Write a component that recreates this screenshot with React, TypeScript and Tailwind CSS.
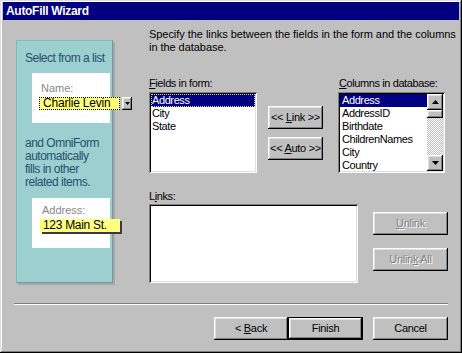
import React from 'react';

const raised =
  'bg-[#c0c0c0] shadow-[inset_-1px_-1px_#000,inset_1px_1px_#fff,inset_-2px_-2px_#808080,inset_2px_2px_#dfdfdf]';
const sunken =
  'bg-white shadow-[inset_1px_1px_#808080,inset_-1px_-1px_#fff,inset_2px_2px_#000,inset_-2px_-2px_#dfdfdf]';

interface ButtonProps {
  children: React.ReactNode;
  className?: string;
  disabled?: boolean;
}

const Button: React.FC<ButtonProps> = ({ children, className = '', disabled = false }) => (
  <div
    className={`flex h-[23px] items-center justify-center text-[11px] tracking-[-0.3px] ${raised} ${
      disabled ? 'text-[#808080] [text-shadow:1px_1px_0_#fff]' : 'text-black'
    } ${className}`}
  >
    <span className="whitespace-pre">{children}</span>
  </div>
);

const Arrow = ({ down = false }: { down?: boolean }) => (
  <svg width="7" height="4" viewBox="0 0 7 4">
    {down ? <polygon points="0,0 7,0 3.5,4" fill="#000" /> : <polygon points="0,4 7,4 3.5,0" fill="#000" />}
  </svg>
);

const fields = ['Address', 'City', 'State'];
const columns = ['Address', 'AddressID', 'Birthdate', 'ChildrenNames', 'City', 'Country'];

export default function App() {
  return (
    <div className="flex h-[353px] w-[462px] flex-col overflow-hidden bg-[#c0c0c0] px-[3px] pt-[2px] [font-family:'Liberation_Sans',Arial,sans-serif] shadow-[inset_-1px_-1px_#000,inset_1px_1px_#dfdfdf,inset_-2px_-2px_#808080,inset_2px_2px_#fff]">
      <div className="h-[18px] shrink-0 bg-[#000080] pl-[3px] text-[12px] font-bold leading-[18px] tracking-[-0.3px] text-white">
        AutoFill Wizard
      </div>

      <div className="flex">
        {/* illustration panel */}
        <div className="ml-[13px] mt-[20px] h-[243px] w-[97px] shrink-0 bg-[#9ccfcf] pt-[12px] text-[12px] leading-[13px] tracking-[-0.5px] text-[#27506e] shadow-[inset_-1px_-1px_#6d9d9d,inset_1px_1px_#86b6b6,2px_2px_0_#a8a8a8]">
          <div className="whitespace-nowrap pl-[9px]">Select from a list</div>
          <div className="ml-[16px] mt-[8px] h-[50px] w-[78px] bg-white pt-[9px]">
            <div className="pl-[9px] text-[11px] tracking-normal text-[#888]">Name:</div>
            <div className="ml-[7px] mt-[2px] flex w-max gap-[2px]">
              <div className="h-[13px] w-[81px] border border-dotted border-black bg-[#ffff80] pl-[3px] text-[12px] leading-[11px] tracking-[-0.2px] text-black">
                Charlie Levin
              </div>
              <div className={`flex h-[13px] w-[10px] items-center justify-center ${raised}`}>
                <svg width="5" height="3" viewBox="0 0 5 3">
                  <polygon points="0,0 5,0 2.5,3" fill="#000" />
                </svg>
              </div>
            </div>
          </div>
          <div className="mt-[14px] whitespace-nowrap pl-[9px]">
            and OmniForm
            <br />
            automatically
            <br />
            fills in other
            <br />
            related items.
          </div>
          <div className="ml-[16px] mt-[9px] h-[50px] w-[78px] bg-white pt-[6px]">
            <div className="pl-[10px] text-[11px] tracking-normal text-[#888]">Address:</div>
            <div className="ml-[8px] mt-[2px] h-[13px] w-[80px] whitespace-nowrap bg-[#ffff80] pl-[3px] text-[12px] leading-[13px] tracking-[-0.3px] text-black shadow-[2px_2px_0_#3a3a3a]">
              123 Main St.
            </div>
          </div>
        </div>

        {/* form side */}
        <div className="ml-[36px] mt-[8px] w-[299px] text-[11px] leading-[13px] tracking-[-0.4px] text-black">
          <div className="whitespace-nowrap tracking-[-0.05px]">
            Specify the links between the fields in the form and the columns
            <br />
            in the database.
          </div>

          <div className="mt-[23px] flex">
            <div className="w-[190px]">
              <u>F</u>ields in form:
            </div>
            <div>
              <u>C</u>olumns in database:
            </div>
          </div>

          <div className="mt-[2px] flex items-start">
            <div className={`h-[81px] w-[108px] p-[2px] ${sunken}`}>
              {fields.map((f, i) => (
                <div
                  key={f}
                  className={`h-[13px] whitespace-nowrap pl-[1px] leading-[13px] ${
                    i === 0
                      ? 'bg-[#000080] text-white outline-1 -outline-offset-1 outline-dotted outline-[#d8d890]'
                      : ''
                  }`}
                >
                  {f}
                </div>
              ))}
            </div>

            <div className="ml-[11px] mt-[14px] flex w-[55px] flex-col gap-[8px]">
              <Button>
                &lt;&lt; <u>L</u>ink &gt;&gt;
              </Button>
              <Button>
                &lt;&lt; <u>A</u>uto &gt;&gt;
              </Button>
            </div>

            <div className={`ml-[15px] flex h-[81px] w-[107px] p-[2px] ${sunken}`}>
              <div className="flex-1 overflow-hidden">
                {columns.map((c, i) => (
                  <div
                    key={c}
                    className={`h-[13px] whitespace-nowrap pl-[2px] leading-[13px] ${
                      i === 0 ? 'bg-[#000080] text-white' : ''
                    }`}
                  >
                    {c}
                  </div>
                ))}
              </div>
              <div className="flex w-[16px] flex-col">
                <div className={`flex h-[16px] items-center justify-center ${raised}`}>
                  <Arrow />
                </div>
                <div className={`h-[8px] ${raised}`} />
                <div className="flex-1 bg-[repeating-conic-gradient(#fff_0_25%,#c0c0c0_0_50%)] bg-[length:2px_2px]" />
                <div className={`flex h-[16px] items-center justify-center ${raised}`}>
                  <Arrow down />
                </div>
              </div>
            </div>
          </div>

          <div className="mt-[17px]">
            L<u>i</u>nks:
          </div>
          <div className="mt-[1px] flex items-start">
            <div className={`h-[79px] w-[209px] ${sunken}`} />
            <div className="ml-[15px] mt-[8px] flex w-[75px] flex-col gap-[13px]">
              <Button disabled>
                <u>U</u>nlink
              </Button>
              <Button disabled>
                Unlin<u>k</u> All
              </Button>
            </div>
          </div>
        </div>
      </div>

      <div className="ml-[11px] mt-[20px] h-[2px] w-[434px] border-t border-b border-t-[#808080] border-b-white" />

      <div className="ml-[211px] mt-[12px] flex">
        <Button className="w-[74px]">
          &lt; <u>B</u>ack
        </Button>
        <div className="h-[23px] w-[75px] border border-black">
          <div className={`flex h-full items-center justify-center text-[11px] tracking-[-0.3px] ${raised}`}>
            Finish
          </div>
        </div>
        <Button className="ml-[10px] w-[75px]">Cancel</Button>
      </div>
    </div>
  );
}
